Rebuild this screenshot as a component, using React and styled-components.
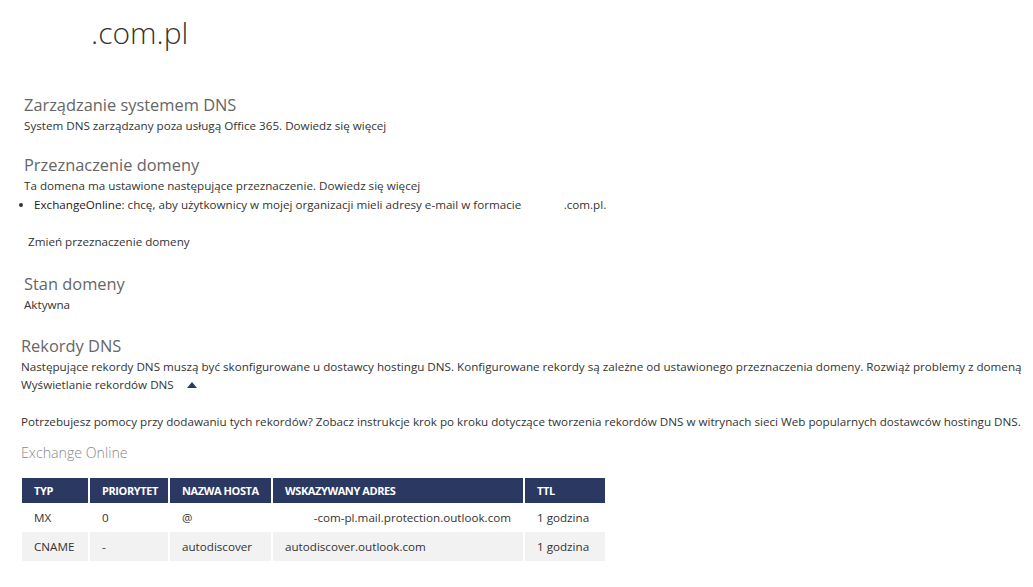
import React from 'react';
import styled, { createGlobalStyle } from 'styled-components';

const GlobalStyle = createGlobalStyle`
  body {
    margin: 0;
    background: #fff;
    font-family: 'Open Sans', 'Noto Sans', sans-serif;
    font-size: 11.65px;
    color: #333;
  }
`;

const Page = styled.div`
  width: 1033px;
  height: 587px;
  overflow: hidden;
  display: flex;
  flex-direction: column;
`;

const DomainTitle = styled.h1`
  margin: 14px 0 0 91px;
  font-size: 30px;
  font-weight: 300;
  line-height: 38px;
  color: #333;
`;

const Section = styled.section`
  margin-top: ${({ $gap }) => $gap}px;
  padding-left: ${({ $indent }) => $indent}px;
  display: flex;
  flex-direction: column;
`;

const Heading = styled.h2`
  margin: 0;
  font-size: 16.4px;
  font-weight: 400;
  line-height: 22px;
  color: #666;
`;

const Text = styled.p`
  margin: 0;
  line-height: 19px;
  white-space: nowrap;
`;

const Link = styled.a`
  color: #333;
  text-decoration: none;
`;

const List = styled.ul`
  margin: 0;
  padding-left: 10px;
  line-height: 19px;
  white-space: nowrap;
`;

const Strong = styled.span`
  color: #1a1a1a;
`;

const Toggle = styled.div`
  display: flex;
  align-items: center;
  gap: 13px;
  line-height: 17px;
`;

const ArrowUp = styled.span`
  width: 0;
  height: 0;
  border-left: 5px solid transparent;
  border-right: 5px solid transparent;
  border-bottom: 6px solid #2b3a63;
`;

const SubHeading = styled.h3`
  margin: 0;
  font-size: 14.2px;
  font-weight: 300;
  line-height: 20px;
  color: #888;
`;

const Table = styled.table`
  margin: 15px 0 0 22px;
  border-collapse: collapse;
  table-layout: fixed;
  width: 583px;
`;

const Col = styled.col`
  width: ${({ $w }) => $w}px;
`;

const Th = styled.th`
  height: 25px;
  padding: 0 0 0 12px;
  background: #2b3862;
  color: #fff;
  font-size: 11px;
  font-weight: 700;
  text-align: left;
  letter-spacing: -0.4px;
  white-space: nowrap;
  border-right: 2px solid #fff;
  &:last-child {
    border-right: 0;
  }
`;

const Row = styled.tr`
  background: ${({ $alt }) => ($alt ? '#f2f2f2' : '#fff')};
`;

const Td = styled.td`
  height: 29px;
  padding: 0 0 0 12px;
  white-space: nowrap;
  border-right: 2px solid #fff;
  text-align: ${({ $right }) => ($right ? 'right' : 'left')};
  padding-right: ${({ $right }) => ($right ? '12px' : '0')};
  &:last-child {
    border-right: 0;
  }
`;

const columns = [
  { label: 'TYP', w: 67 },
  { label: 'PRIORYTET', w: 80 },
  { label: 'NAZWA HOSTA', w: 103 },
  { label: 'WSKAZYWANY ADRES', w: 252 },
  { label: 'TTL', w: 81 }
];

const records = [
  { type: 'MX', prio: '0', host: '@', addr: '-com-pl.mail.protection.outlook.com', right: true, ttl: '1 godzina' },
  { type: 'CNAME', prio: '-', host: 'autodiscover', addr: 'autodiscover.outlook.com', ttl: '1 godzina' }
];

const App = () => (
  <Page>
    <GlobalStyle />
    <DomainTitle>.com.pl</DomainTitle>

    <Section $gap={42} $indent={24}>
      <Heading>Zarządzanie systemem DNS</Heading>
      <Text>
        System DNS zarządzany poza usługą Office 365. <Link href="#">Dowiedz się więcej</Link>
      </Text>
    </Section>

    <Section $gap={19} $indent={24}>
      <Heading>Przeznaczenie domeny</Heading>
      <Text>
        Ta domena ma ustawione następujące przeznaczenie. <Link href="#">Dowiedz się więcej</Link>
      </Text>
      <List>
        <li>
          <Strong>ExchangeOnline</Strong>: chcę, aby użytkownicy w mojej organizacji mieli adresy e-mail w formacie
          {'\u00a0'.repeat(14)}.com.pl.
        </li>
      </List>
    </Section>

    <Section $gap={18} $indent={28}>
      <Text>
        <Link href="#">Zmień przeznaczenie domeny</Link>
      </Text>
    </Section>

    <Section $gap={22} $indent={24}>
      <Heading>Stan domeny</Heading>
      <Text>Aktywna</Text>
    </Section>

    <Section $gap={21} $indent={21}>
      <Heading>Rekordy DNS</Heading>
      <Text>
        Następujące rekordy DNS muszą być skonfigurowane u dostawcy hostingu DNS. Konfigurowane rekordy są zależne od
        ustawionego przeznaczenia domeny. <Link href="#">Rozwiąż problemy z domeną</Link>
      </Text>
      <Toggle>
        <span>Wyświetlanie rekordów DNS</span>
        <ArrowUp />
      </Toggle>
    </Section>

    <Section $gap={19} $indent={21}>
      <Text>
        Potrzebujesz pomocy przy dodawaniu tych rekordów? Zobacz instrukcje krok po kroku dotyczące tworzenia rekordów DNS
        w witrynach sieci Web popularnych dostawców hostingu DNS.
      </Text>
    </Section>

    <Section $gap={12} $indent={21}>
      <SubHeading>Exchange Online</SubHeading>
    </Section>

    <Table>
      <colgroup>
        {columns.map(col => (
          <Col key={col.label} $w={col.w} />
        ))}
      </colgroup>
      <thead>
        <tr>
          {columns.map(col => (
            <Th key={col.label}>{col.label}</Th>
          ))}
        </tr>
      </thead>
      <tbody>
        {records.map((rec, index) => (
          <Row key={rec.type} $alt={index % 2 === 1}>
            <Td>{rec.type}</Td>
            <Td>{rec.prio}</Td>
            <Td>{rec.host}</Td>
            <Td $right={rec.right}>{rec.addr}</Td>
            <Td>{rec.ttl}</Td>
          </Row>
        ))}
      </tbody>
    </Table>
  </Page>
);

export default App;
